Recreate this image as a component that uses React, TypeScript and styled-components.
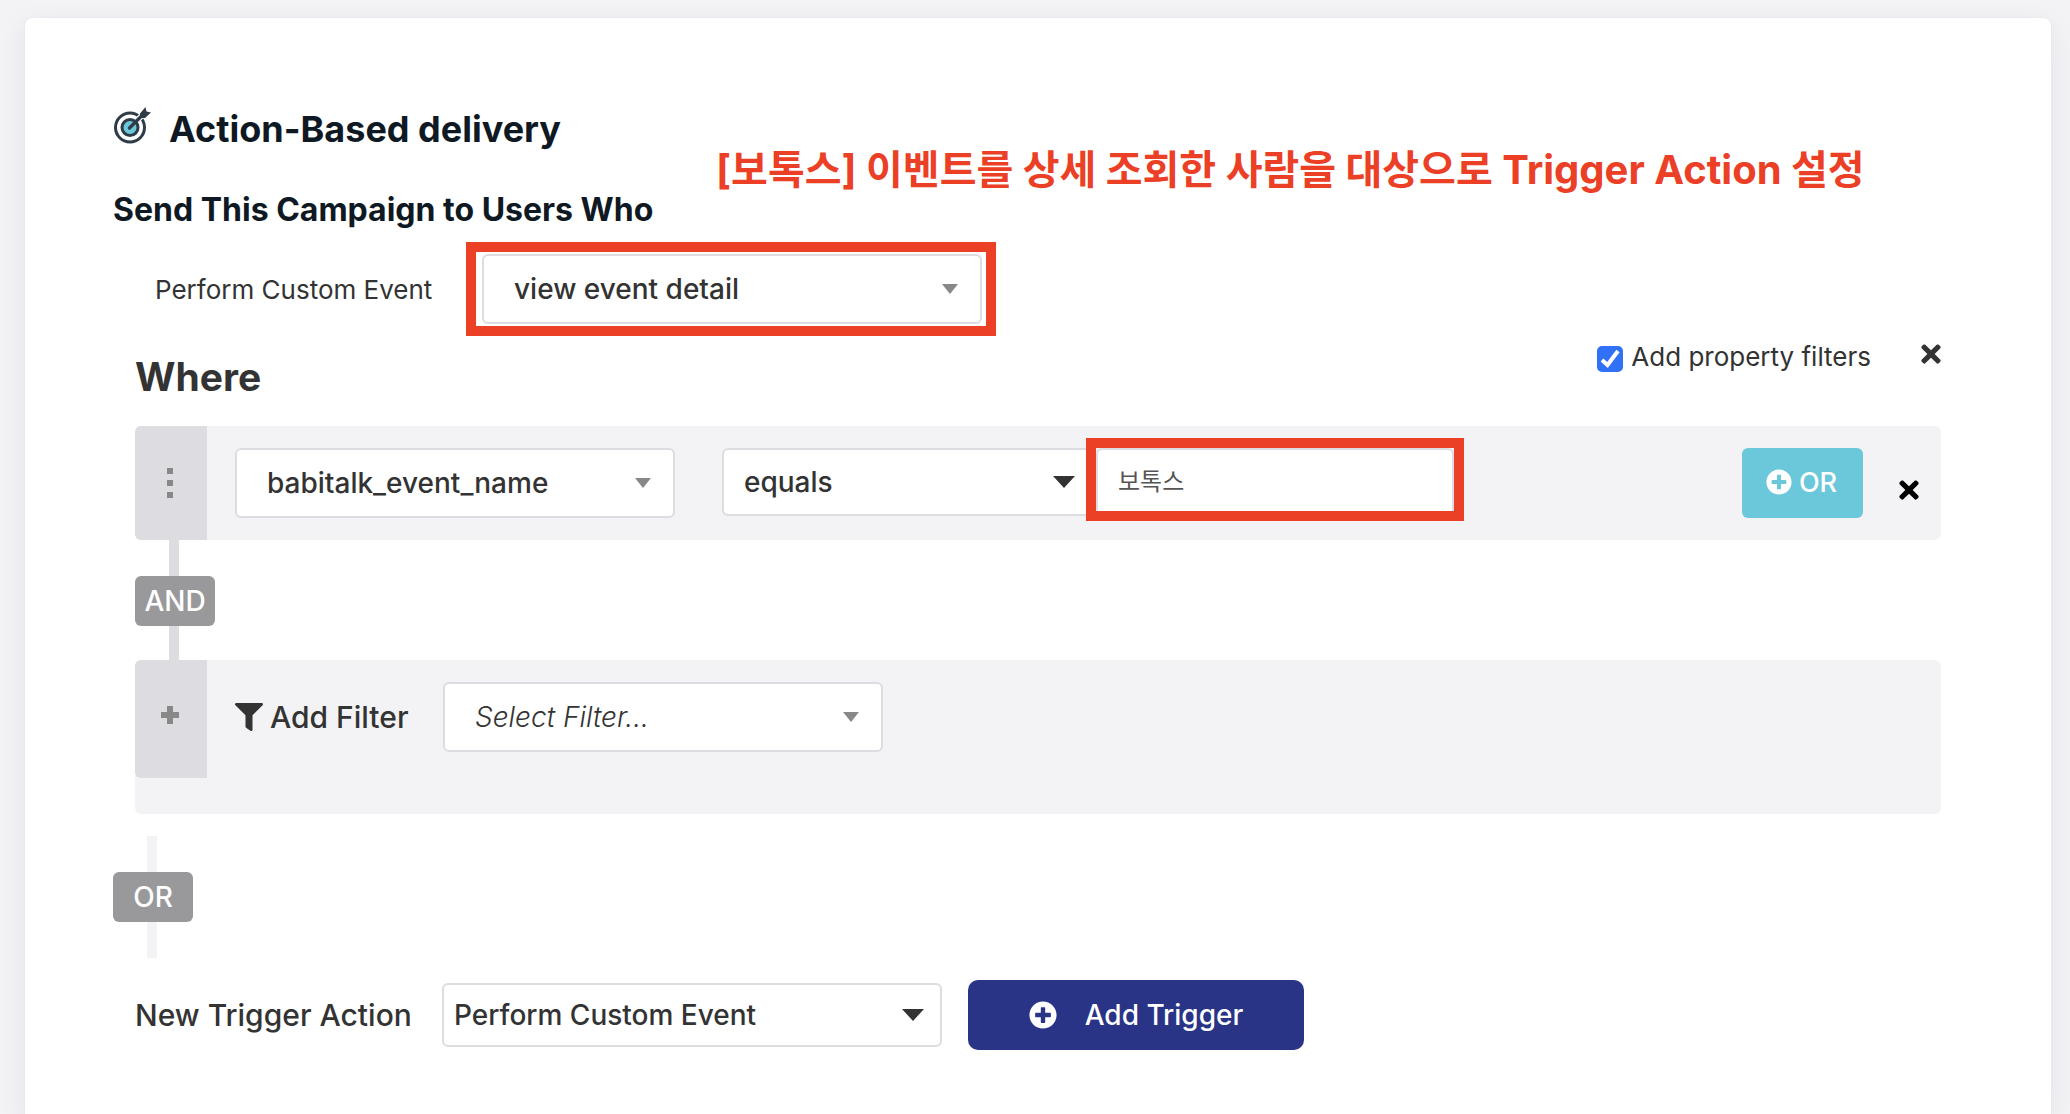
import React, { useState } from "react";
import styled, { createGlobalStyle, css } from "styled-components";
import { FaFilter, FaPlusCircle, FaTimes } from "react-icons/fa";

const color = {
  page: "#f3f3f6",
  panel: "#f3f3f6",
  handle: "#dddce1",
  border: "#dddce1",
  ink: "#0f1923",
  text: "#333333",
  muted: "#888888",
  badge: "#99999b",
  teal: "#6ac8da",
  navy: "#293487",
  blue: "#3071f6",
  red: "#eb4026",
};

const GlobalStyle = createGlobalStyle`
  *, *::before, *::after { box-sizing: border-box; }
  body {
    margin: 0;
    background: ${color.page};
    color: ${color.text};
    font-family: Inter, "Noto Sans CJK KR", sans-serif;
  }
  button, input, select { font: inherit; color: inherit; }
`;

const Page = styled.main`
  display: flex;
  min-height: 100vh;
  padding: 18px 19px 0 25px;
`;

const Card = styled.section`
  position: relative;
  flex: 1;
  min-width: 0;
  padding: 89px 110px 40px 88px;
  background: #fff;
  border-radius: 8px 8px 0 0;
  box-shadow: 0 0 0 1px rgba(230, 232, 236, 0.6), 0 8px 28px rgba(30, 40, 70, 0.08);
`;

const TitleRow = styled.header`
  display: flex;
  align-items: flex-start;
  gap: 18px;
`;

const Title = styled.h1`
  margin: 0;
  color: ${color.ink};
  font-size: 36px;
  font-weight: 700;
  line-height: 44px;
`;

const Subtitle = styled.h2`
  margin: 39px 0 0;
  color: ${color.ink};
  font-size: 32px;
  font-weight: 700;
  line-height: 40px;
`;

const Annotation = styled.p`
  position: absolute;
  top: 128px;
  left: 691px;
  margin: 0;
  color: ${color.red};
  font-size: 40px;
  font-weight: 700;
  line-height: 48px;
  white-space: nowrap;
`;

const EventRow = styled.div`
  display: grid;
  grid-template-columns: 327px 500px;
  align-items: center;
  margin-top: 24px;
  padding-left: 42px;
`;

const Label = styled.label<{ $size: number; $weight?: number }>`
  display: flex;
  align-items: center;
  gap: 7px;
  font-size: ${(p) => p.$size}px;
  font-weight: ${(p) => p.$weight ?? 400};
  white-space: nowrap;
`;

const highlight = css`
  position: relative;
  &::after {
    content: "";
    position: absolute;
    border: 10px solid ${color.red};
    pointer-events: none;
  }
`;

const HighlightedEvent = styled.div`
  ${highlight}
  &::after { inset: -12px -14px -12px -16px; }
`;

const HighlightedValue = styled.div`
  ${highlight}
  width: 358px;
  &::after { inset: -10px -10px -5px; }
`;

const Picker = styled.span<{ $width: number; $strong?: boolean }>`
  display: grid;
  align-items: center;
  width: ${(p) => p.$width}px;
  & > * { grid-area: 1 / 1; }
  &::after {
    content: "";
    grid-area: 1 / 1;
    justify-self: end;
    width: ${(p) => (p.$strong ? 22 : 16)}px;
    height: ${(p) => (p.$strong ? 12 : 10)}px;
    margin-right: ${(p) => (p.$strong ? 18 : 24)}px;
    background: ${(p) => (p.$strong ? color.text : color.muted)};
    clip-path: polygon(0 0, 100% 0, 50% 100%);
    pointer-events: none;
  }
`;

const OperatorPicker = styled(Picker)`
  margin: 0 3px 0 47px;
`;

const Select = styled.select<{ $height: number; $indent: number; $placeholder?: boolean }>`
  appearance: none;
  width: 100%;
  height: ${(p) => p.$height}px;
  padding: 0 50px 0 ${(p) => p.$indent}px;
  border: 2px solid ${color.border};
  border-radius: 6px;
  background: #fff;
  font-size: 28px;
  font-weight: 500;
  ${(p) => p.$placeholder && css`font-style: italic; font-weight: 300;`}
`;

const TextInput = styled.input`
  width: 100%;
  height: 68px;
  padding: 0 20px 6px;
  border: 2px solid ${color.border};
  border-radius: 6px;
  background: #fff;
  color: #555;
  font-size: 24px;
`;

const Filters = styled.section`
  margin: 18px 0 0 22px;
`;

const FiltersHeader = styled.div`
  display: flex;
  align-items: flex-start;
  margin-bottom: 25px;
`;

const Where = styled.h2`
  flex: 1;
  margin: 11px 0 0;
  font-size: 39px;
  font-weight: 700;
  line-height: 48px;
`;

const CheckLabel = styled.label`
  display: flex;
  align-items: flex-end;
  gap: 8px;
  margin-right: 50px;
  font-size: 26px;
  line-height: 30px;
`;

const Check = styled.span`
  display: grid;
  & > * { grid-area: 1 / 1; }
  svg { pointer-events: none; }
`;

const CheckInput = styled.input`
  appearance: none;
  width: 26px;
  height: 26px;
  margin: 0;
  border-radius: 5px;
  background: #fff;
  border: 2px solid ${color.muted};
  &:checked { background: ${color.blue}; border-color: ${color.blue}; }
`;

const IconButton = styled.button<{ $dark?: boolean }>`
  display: flex;
  align-items: center;
  justify-content: center;
  width: 20px;
  height: 24px;
  padding: 0;
  border: 0;
  background: none;
  color: ${(p) => (p.$dark ? "#000" : color.text)};
  cursor: pointer;
  ${(p) => p.$dark && css`align-self: flex-end; height: 56px;`}
`;

const FilterPanel = styled.div`
  display: flex;
  align-items: flex-start;
  background: ${color.panel};
  border-radius: 6px;
`;

const Handle = styled.span<{ $height: number; $add?: boolean }>`
  display: flex;
  flex: none;
  align-items: center;
  justify-content: center;
  width: 72px;
  height: ${(p) => p.$height}px;
  padding: 0 3px ${(p) => (p.$add ? 8 : 0)}px 0;
  background: ${color.handle};
  border-radius: 6px 0 0 6px;
`;

const FilterBody = styled.div`
  display: flex;
  flex: 1;
  align-items: flex-start;
  padding: 22px 22px 22px 28px;
`;

const AddFilterBody = styled.div`
  display: grid;
  grid-template-columns: 208px 440px;
  align-items: center;
  padding: 22px 22px 62px 28px;
`;

const OrButton = styled.button`
  display: flex;
  align-items: center;
  justify-content: center;
  gap: 7px;
  width: 121px;
  height: 70px;
  margin: 0 36px 0 auto;
  padding: 0 2px 2px 0;
  border: 0;
  border-radius: 6px;
  background: ${color.teal};
  color: #fff;
  font-size: 27px;
  font-weight: 500;
  cursor: pointer;
`;

const Joiner = styled.div`
  width: 80px;
`;

const Bar = styled.span<{ $height: number; $tone: string }>`
  display: block;
  width: 10px;
  height: ${(p) => p.$height}px;
  margin-left: 34px;
  background: ${(p) => p.$tone};
`;

const Badge = styled.span`
  display: block;
  border-radius: 6px;
  background: ${color.badge};
  color: #fff;
  font-size: 28px;
  font-weight: 500;
  line-height: 50px;
  text-align: center;
`;

const OrJoiner = styled(Joiner)`
  margin: 22px 0;
`;

const TriggerRow = styled.div`
  display: grid;
  grid-template-columns: 307px 500px auto;
  align-items: center;
  justify-content: start;
  padding-left: 22px;
`;

const AddTrigger = styled.button`
  display: flex;
  align-items: center;
  justify-content: center;
  gap: 28px;
  width: 336px;
  height: 70px;
  margin-left: 26px;
  padding: 0;
  border: 0;
  border-radius: 10px;
  background: ${color.navy};
  color: #fff;
  font-size: 28px;
  font-weight: 500;
  cursor: pointer;
`;

const TargetIcon = () => (
  <svg width="38" height="38" viewBox="0 0 38 38" fill="none" aria-hidden="true">
    <circle cx="17" cy="20.500" r="14.500" stroke="#2f3c48" strokeWidth="3" />
    <circle cx="17" cy="20.500" r="8" fill={color.teal} stroke="#2f3c48" strokeWidth="3" />
    <path d="M24 13.500 31 6.500" stroke="#fff" strokeWidth="6" />
    <path d="M16.500 21 31 6.500" stroke="#2f3c48" strokeWidth="3.400" strokeLinecap="round" />
    <path d="M27 6.500 32.500 0 33.500 4.500 38 5.500 32 11 27 11Z" fill="#2f3c48" />
  </svg>
);

const CheckIcon = () => (
  <svg width="26" height="26" viewBox="0 0 26 26" fill="none" aria-hidden="true">
    <path d="M5 14 L10.500 19 L21 5" stroke="#fff" strokeWidth="4" />
  </svg>
);

const DotsIcon = () => (
  <svg width="6" height="30" viewBox="0 0 6 30" fill={color.muted} aria-hidden="true">
    <rect width="6" height="6" />
    <rect y="12" width="6" height="6" />
    <rect y="24" width="6" height="6" />
  </svg>
);

const PlusIcon = () => (
  <svg width="18" height="18" viewBox="0 0 18 18" fill={color.muted} aria-hidden="true">
    <path d="M6 0h6v6h6v6h-6v6H6v-6H0V6h6z" />
  </svg>
);

export default function App() {
  const [filtersOn, setFiltersOn] = useState(true);
  const [value, setValue] = useState("보톡스");

  return (
    <>
      <GlobalStyle />
      <Page>
        <Card>
          <TitleRow>
            <TargetIcon />
            <Title>Action-Based delivery</Title>
          </TitleRow>
          <Subtitle>Send This Campaign to Users Who</Subtitle>
          <Annotation>[보톡스] 이벤트를 상세 조회한 사람을 대상으로 Trigger Action 설정</Annotation>

          <EventRow>
            <Label htmlFor="event" $size={26}>Perform Custom Event</Label>
            <HighlightedEvent>
              <Picker $width={500}>
                <Select id="event" $height={70} $indent={30}>
                  <option>view event detail</option>
                </Select>
              </Picker>
            </HighlightedEvent>
          </EventRow>

          <Filters>
            <FiltersHeader>
              <Where>Where</Where>
              <CheckLabel>
                <Check>
                  <CheckInput
                    type="checkbox"
                    checked={filtersOn}
                    onChange={(e) => setFiltersOn(e.target.checked)}
                  />
                  {filtersOn && <CheckIcon />}
                </Check>
                Add property filters
              </CheckLabel>
              <IconButton type="button" aria-label="Remove trigger">
                <FaTimes size={28} />
              </IconButton>
            </FiltersHeader>

            <FilterPanel>
              <Handle $height={114}><DotsIcon /></Handle>
              <FilterBody>
                <Picker $width={440}>
                  <Select aria-label="Property" $height={70} $indent={30}>
                    <option>babitalk_event_name</option>
                  </Select>
                </Picker>
                <OperatorPicker $width={371} $strong>
                  <Select aria-label="Operator" $height={68} $indent={20}>
                    <option>equals</option>
                  </Select>
                </OperatorPicker>
                <HighlightedValue>
                  <TextInput aria-label="Value" value={value} onChange={(e) => setValue(e.target.value)} />
                </HighlightedValue>
                <OrButton type="button"><FaPlusCircle size={26} />OR</OrButton>
                <IconButton type="button" $dark aria-label="Remove filter">
                  <FaTimes size={28} />
                </IconButton>
              </FilterBody>
            </FilterPanel>

            <Joiner>
              <Bar $height={36} $tone={color.handle} />
              <Badge>AND</Badge>
              <Bar $height={34} $tone={color.handle} />
            </Joiner>

            <FilterPanel>
              <Handle $height={118} $add><PlusIcon /></Handle>
              <AddFilterBody>
                <Label htmlFor="filter" $size={30} $weight={500}><FaFilter size={28} />Add Filter</Label>
                <Picker $width={440}>
                  <Select id="filter" $height={70} $indent={30} $placeholder>
                    <option>Select Filter...</option>
                  </Select>
                </Picker>
              </AddFilterBody>
            </FilterPanel>
          </Filters>

          <OrJoiner>
            <Bar $height={36} $tone={color.panel} />
            <Badge>OR</Badge>
            <Bar $height={36} $tone={color.panel} />
          </OrJoiner>

          <TriggerRow>
            <Label htmlFor="action" $size={30} $weight={500}>New Trigger Action</Label>
            <Picker $width={500} $strong>
              <Select id="action" $height={64} $indent={10}>
                <option>Perform Custom Event</option>
              </Select>
            </Picker>
            <AddTrigger type="button"><FaPlusCircle size={28} />Add Trigger</AddTrigger>
          </TriggerRow>
        </Card>
      </Page>
    </>
  );
}
